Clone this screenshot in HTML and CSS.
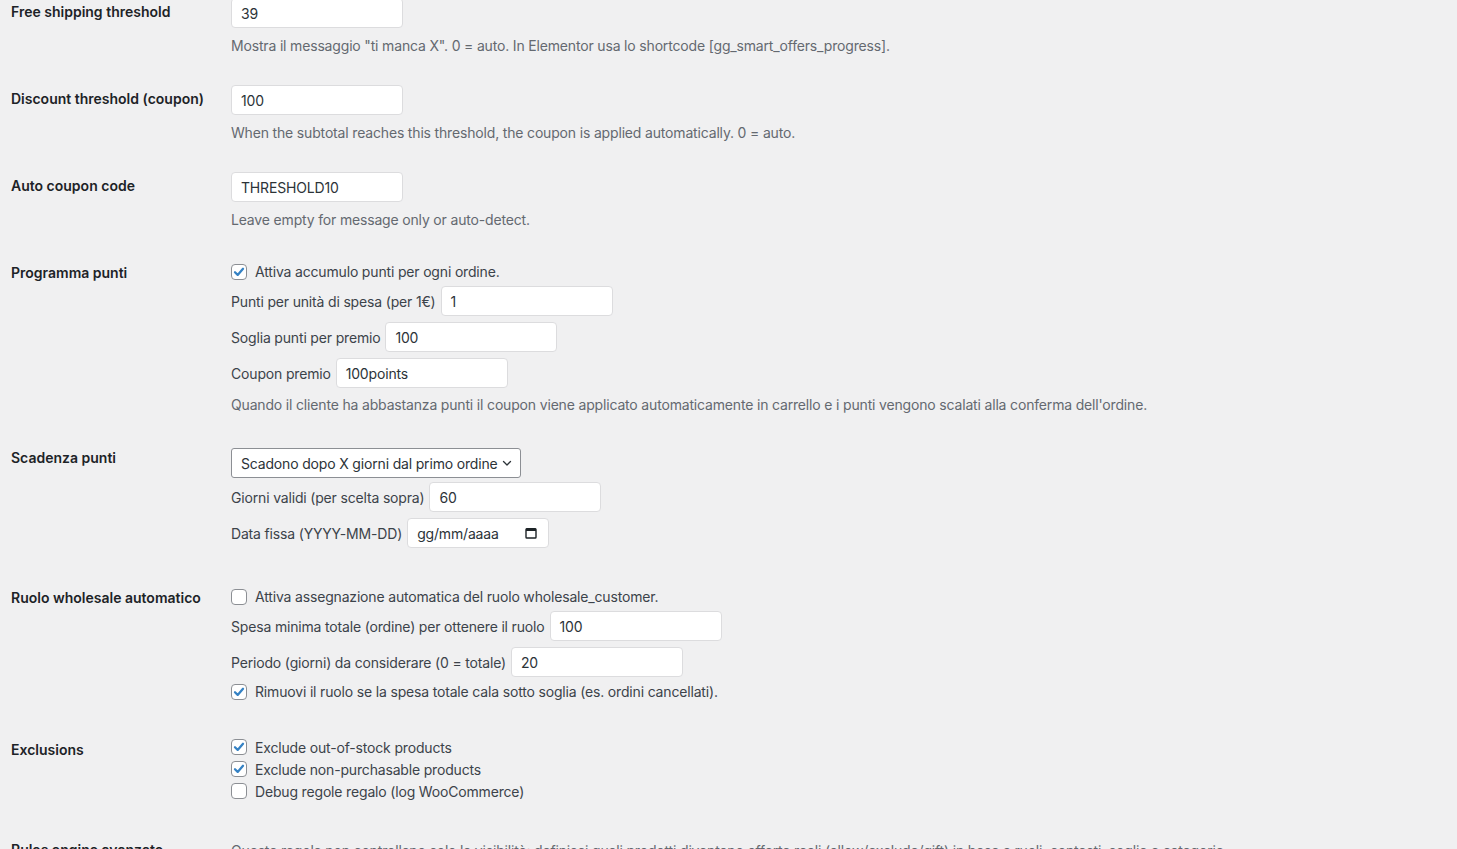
FILE: index.html
```html
<!DOCTYPE html>
<html lang="it">
<head>
<meta charset="utf-8">
<title>Impostazioni</title>
<link rel="stylesheet" href="styles.css">
</head>
<body>
<div class="wrap">
  <div class="form">

    <div class="row">
      <div class="th">Free shipping threshold</div>
      <div class="td">
        <div class="input w172">39</div>
        <p class="description">Mostra il messaggio "ti manca X". 0 = auto. In Elementor usa lo shortcode [gg_smart_offers_progress].</p>
      </div>
    </div>

    <div class="row">
      <div class="th">Discount threshold (coupon)</div>
      <div class="td">
        <div class="input w172">100</div>
        <p class="description">When the subtotal reaches this threshold, the coupon is applied automatically. 0 = auto.</p>
      </div>
    </div>

    <div class="row">
      <div class="th">Auto coupon code</div>
      <div class="td">
        <div class="input w172">THRESHOLD10</div>
        <p class="description">Leave empty for message only or auto-detect.</p>
      </div>
    </div>

    <div class="row">
      <div class="th">Programma punti</div>
      <div class="td">
        <div class="check-line first"><span class="cb checked"><svg viewBox="0 0 16 16"><path d="M3.4 8.3 6.5 11.3 12.6 4.3" fill="none" stroke="#3582c4" stroke-width="2.6" stroke-linecap="round" stroke-linejoin="round"/></svg></span>Attiva accumulo punti per ogni ordine.</div>
        <div class="field-line after-check">Punti per unità di spesa (per 1€)<div class="input w172">1</div></div>
        <div class="field-line">Soglia punti per premio<div class="input w172">100</div></div>
        <div class="field-line">Coupon premio<div class="input w172">100points</div></div>
        <p class="description after-field">Quando il cliente ha abbastanza punti il coupon viene applicato automaticamente in carrello e i punti vengono scalati alla conferma dell'ordine.</p>
      </div>
    </div>

    <div class="row">
      <div class="th">Scadenza punti</div>
      <div class="td">
        <div class="select">Scadono dopo X giorni dal primo ordine<svg class="chev" viewBox="0 0 12 12"><path d="M2.5 4.5 6 8 9.5 4.5" fill="none" stroke="#2c3338" stroke-width="1.3" stroke-linecap="round" stroke-linejoin="round"/></svg></div>
        <div class="field-line after-select">Giorni validi (per scelta sopra)<div class="input w172">60</div></div>
        <div class="field-line">Data fissa (YYYY-MM-DD)<div class="input date">gg/mm/aaaa<svg class="cal" viewBox="0 0 14 14"><rect x="2" y="2.6" width="10" height="9.4" rx="0.8" fill="none" stroke="#1d2327" stroke-width="1.4"/><rect x="2" y="2.6" width="10" height="2.4" fill="#1d2327"/></svg></div></div>
        <div class="spacer6"></div>
      </div>
    </div>

    <div class="row">
      <div class="th">Ruolo wholesale automatico</div>
      <div class="td">
        <div class="check-line first"><span class="cb"></span>Attiva assegnazione automatica del ruolo wholesale_customer.</div>
        <div class="field-line after-check">Spesa minima totale (ordine) per ottenere il ruolo<div class="input w172">100</div></div>
        <div class="field-line">Periodo (giorni) da considerare (0 = totale)<div class="input w172">20</div></div>
        <div class="check-line after-input"><span class="cb checked"><svg viewBox="0 0 16 16"><path d="M3.4 8.3 6.5 11.3 12.6 4.3" fill="none" stroke="#3582c4" stroke-width="2.6" stroke-linecap="round" stroke-linejoin="round"/></svg></span>Rimuovi il ruolo se la spesa totale cala sotto soglia (es. ordini cancellati).</div>
        <div class="spacer2"></div>
      </div>
    </div>

    <div class="row">
      <div class="th">Exclusions</div>
      <div class="td">
        <div class="check-line small"><span class="cb checked"><svg viewBox="0 0 16 16"><path d="M3.4 8.3 6.5 11.3 12.6 4.3" fill="none" stroke="#3582c4" stroke-width="2.6" stroke-linecap="round" stroke-linejoin="round"/></svg></span>Exclude out-of-stock products</div>
        <div class="check-line small"><span class="cb checked"><svg viewBox="0 0 16 16"><path d="M3.4 8.3 6.5 11.3 12.6 4.3" fill="none" stroke="#3582c4" stroke-width="2.6" stroke-linecap="round" stroke-linejoin="round"/></svg></span>Exclude non-purchasable products</div>
        <div class="check-line small"><span class="cb"></span>Debug regole regalo (log WooCommerce)</div>
        <div class="spacer4"></div>
      </div>
    </div>

    <div class="row">
      <div class="th">Rules engine avanzato</div>
      <div class="td">
        <p class="description first-desc">Queste regole non controllano solo la visibilità: definisci quali prodotti diventano offerte reali (allow/exclude/gift) in base a ruoli, contesti, soglie e categorie.</p>
      </div>
    </div>

  </div>
</div>
</body>
</html>
```

FILE: styles.css
```css
* { box-sizing: border-box; }

html, body {
  margin: 0;
  padding: 0;
  background: #f0f0f1;
  height: 100%;
  overflow: hidden;
}

body {
  font-family: Inter, "Noto Sans", "Liberation Sans", sans-serif;
  font-size: 14px;
  color: #3c434a;
  letter-spacing: -0.17px;
}

.wrap {
  padding-left: 11px;
}

.form {
  margin-top: -17px;
}

.row {
  display: flex;
  align-items: flex-start;
}

.th {
  width: 210px;
  flex: none;
  padding: 20px 10px 20px 0;
  font-weight: 600;
  color: #1d2327;
  line-height: 18px;
  letter-spacing: 0;
}

.td {
  padding: 15px 10px;
  flex: 1;
  min-width: 0;
}

.input {
  height: 30px;
  border: 1px solid #dcdcde;
  border-radius: 4px;
  background: #fff;
  color: #2c3338;
  padding: 0 9px;
  display: flex;
  align-items: center;
  flex: none;
  white-space: nowrap;
}

.w172 { width: 172px; }

.description {
  margin: 8px 0 0;
  line-height: 19px;
  color: #646970;
  white-space: nowrap;
}

.description.after-field { margin-top: 7px; }
.description.first-desc { margin-top: 5px; }

.check-line {
  display: flex;
  align-items: center;
  height: 25px;
  white-space: nowrap;
}

.check-line.small { height: 22px; }
.check-line.after-input { margin-top: 2px; }

.cb {
  width: 16px;
  height: 16px;
  border: 1px solid #8c8f94;
  border-radius: 4px;
  background: #fff;
  margin-right: 8px;
  flex: none;
  display: flex;
  align-items: center;
  justify-content: center;
}

.cb svg {
  width: 14px;
  height: 14px;
}

.field-line {
  display: flex;
  align-items: center;
  gap: 5px;
  margin-top: 6px;
  white-space: nowrap;
}

.field-line.after-check { margin-top: 2px; }
.field-line.after-select { margin-top: 4px; }

.select {
  margin-top: 4px;
  height: 30px;
  width: 290px;
  border: 1px solid #8c8f94;
  border-radius: 3px;
  background: #fff;
  color: #2c3338;
  padding: 0 7px 0 9px;
  display: flex;
  align-items: center;
  justify-content: space-between;
  white-space: nowrap;
}

.chev {
  width: 12px;
  height: 12px;
  flex: none;
}

.input.date {
  width: 142px;
  justify-content: space-between;
  padding-right: 10px;
}

.cal {
  width: 14px;
  height: 14px;
  flex: none;
}

.spacer6 { height: 6px; }
.spacer4 { height: 4px; }
.spacer2 { height: 2px; }
```
